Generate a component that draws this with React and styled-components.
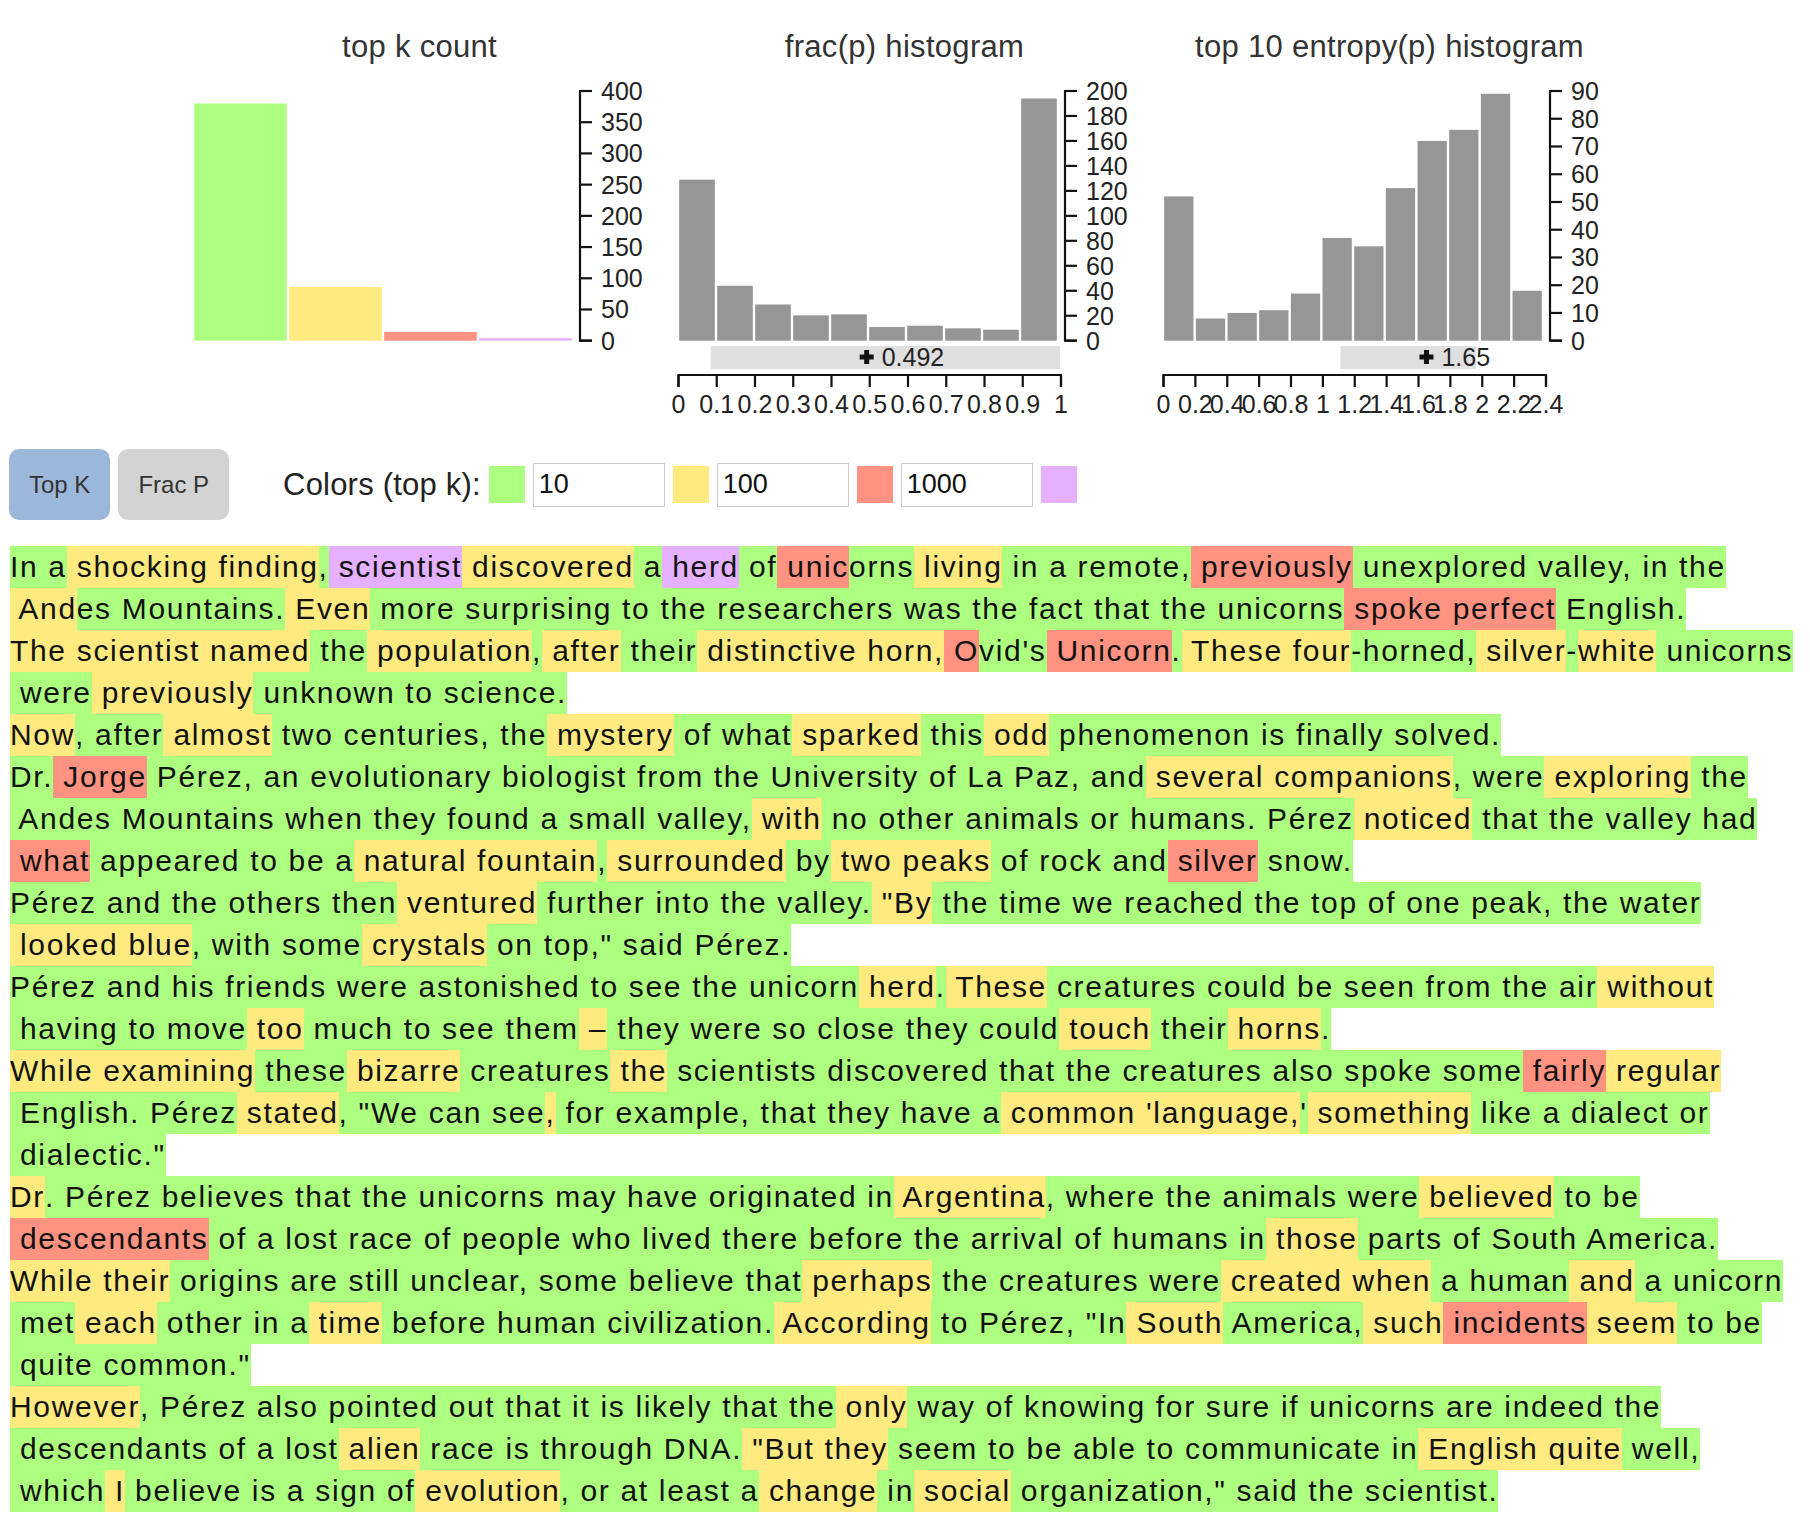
import { useState } from 'react';
import styled, { createGlobalStyle } from 'styled-components';

const COLORS = { g: '#adff80', y: '#ffea80', r: '#ff9280', p: '#e5b0ff' };

const GlobalStyle = createGlobalStyle`
  body {
    margin: 0;
    background: #fff;
    color: #111;
    font-family: "Liberation Sans", Arial, sans-serif;
  }
`;

const Page = styled.div`
  width: 1810px;
`;

const ChartRow = styled.div`
  display: flex;
  padding: 27px 0 0 177px;
`;

const ChartPanel = styled.div`
  width: 485px;
  display: flex;
  flex-direction: column;
  align-items: center;
`;

const ChartTitle = styled.h2`
  margin: 0;
  height: 40px;
  line-height: 40px;
  font-size: 31px;
  font-weight: normal;
  letter-spacing: 0.3px;
  color: #333;
`;

const ChartSvg = styled.svg`
  display: block;
  margin-top: -1px;
  font-family: "Liberation Sans", Arial, sans-serif;
  font-size: 25px;
  fill: #222;
`;

const Controls = styled.div`
  display: flex;
  align-items: center;
  gap: 8px;
  height: 71px;
  margin-top: 23px;
  padding-left: 9px;
`;

const ModeButton = styled.button`
  height: 71px;
  padding: 0 20px;
  border: none;
  border-radius: 10px;
  background: ${(p) => (p.$active ? '#9bb8da' : '#d3d3d3')};
  color: #333;
  font-family: inherit;
  font-size: 24px;
  cursor: pointer;
`;

const ColorsLabel = styled.span`
  margin-left: 46px;
  font-size: 31px;
  letter-spacing: 0.2px;
  color: #222;
`;

const Swatch = styled.span`
  width: 36px;
  height: 37px;
  background: ${(p) => p.$color};
`;

const ThresholdInput = styled.input`
  box-sizing: border-box;
  width: 132px;
  height: 44px;
  padding: 0 5px;
  border: 1px solid #cbcbcb;
  font-family: inherit;
  font-size: 27px;
  color: #111;
  outline: none;
`;

const TextBlock = styled.div`
  margin-top: 26px;
  padding-left: 10px;
`;

const Line = styled.div`
  display: flex;
  height: 42px;
  line-height: 42px;
  font-size: 30px;
  letter-spacing: 1.67px;
  white-space: pre;
`;

const Token = styled.span`
  background: ${(p) => COLORS[p.$c]};
`;

// plot geometry shared by the three charts (svg coords)
const P = { left: 16, right: 396, top: 25, bottom: 274.7, axisX: 403, xl: 16.5, xr: 399, xAxisY: 309 };

function Plus({ x, y }) {
  return (
    <path
      transform={`translate(${x},${y})`}
      d="M-7,-2.5h14v5h-14z M-2.5,-7h5v14h-5z"
      fill="#111"
    />
  );
}

function Chart({ title, bars, yMax, yStep, xLabels, xMax, mean }) {
  const h = P.bottom - P.top;
  const y = (v) => P.bottom - (v / yMax) * h;
  const bw = (P.right - P.left) / bars.length;
  const xs = (v) => P.xl + (v / xMax) * (P.xr - P.xl);
  const yTicks = [];
  for (let v = 0; v <= yMax; v += yStep) yTicks.push(v);

  return (
    <ChartPanel>
      <ChartTitle>{title}</ChartTitle>
      <ChartSvg width="485" height="360" viewBox="0 0 485 360">
        {bars.map((b, i) => (
          <rect
            key={i}
            x={P.left + i * bw + 1.2}
            y={y(b.value)}
            width={bw - 2.4}
            height={P.bottom - y(b.value)}
            fill={b.color || '#969696'}
          />
        ))}

        <path
          d={`M${P.axisX + 12},${P.top}H${P.axisX}V${P.bottom}H${P.axisX + 12}`}
          fill="none"
          stroke="#111"
          strokeWidth="2.2"
        />
        {yTicks.map((v) => (
          <g key={v} transform={`translate(0,${y(v)})`}>
            <line x1={P.axisX} x2={P.axisX + 12} stroke="#111" strokeWidth="2.2" />
            <text x={P.axisX + 21} dy="0.36em">{v}</text>
          </g>
        ))}

        {mean && (
          <g>
            <rect x={xs(mean.lo)} y="280" width={xs(mean.hi) - xs(mean.lo)} height="23" fill="#dfdfdf" />
            <Plus x={xs(mean.value)} y={291} />
            <text x={xs(mean.value) + 15} y="300">{mean.label}</text>
          </g>
        )}

        {xLabels && (
          <g>
            <path
              d={`M${P.xl},${P.xAxisY + 12}V${P.xAxisY}H${P.xr}V${P.xAxisY + 12}`}
              fill="none"
              stroke="#111"
              strokeWidth="2.2"
            />
            {xLabels.map((l, i) => {
              const x = P.xl + (i * (P.xr - P.xl)) / (xLabels.length - 1);
              return (
                <g key={l}>
                  <line x1={x} x2={x} y1={P.xAxisY} y2={P.xAxisY + 12} stroke="#111" strokeWidth="2.2" />
                  <text x={x} y="347" textAnchor="middle">{l}</text>
                </g>
              );
            })}
          </g>
        )}
      </ChartSvg>
    </ChartPanel>
  );
}

const topK = [
  { value: 380, color: COLORS.g },
  { value: 86, color: COLORS.y },
  { value: 14, color: COLORS.r },
  { value: 4, color: COLORS.p },
];
const fracP = [129, 44, 29, 20.3, 21.1, 11, 12, 9.9, 8.8, 194].map((value) => ({ value }));
const entropy = [52, 8, 10, 11, 17, 37, 34, 55, 72, 76, 89, 18].map((value) => ({ value }));

const fracLabels = ['0', '0.1', '0.2', '0.3', '0.4', '0.5', '0.6', '0.7', '0.8', '0.9', '1'];
const entLabels = ['0', '0.2', '0.4', '0.6', '0.8', '1', '1.2', '1.4', '1.6', '1.8', '2', '2.2', '2.4'];

// each visual line: segments split by "|", first char of a segment is its colour key
const LINES = [
  `gIn a|y shocking finding|g,|p scientist|y discovered|g a|p herd|g of|r unic|gorns|y living|g in a remote,|r previously|g unexplored valley, in the`,
  `y And|ges Mountains.|y Even|g more surprising to the researchers was the fact that the unicorns|r spoke perfect|g English.`,
  `yThe scientist named|g the|y population|g,|y after|g their|y distinctive horn,|r O|gvid's|r Unicorn|g.|y These four|g-horned,|y silver|g-|ywhite|g unicorns`,
  `g were|y previously|g unknown to science.`,
  `yNow|g, after|y almost|g two centuries, the|y mystery|g of what|y sparked|g this|y odd|g phenomenon is finally solved.`,
  `gDr.|r Jorge|g Pérez, an evolutionary biologist from the University of La Paz, and|y several companions|g, were|y exploring|g the`,
  `g Andes Mountains when they found a small valley,|y with|g no other animals or humans. Pérez|y noticed|g that the valley had`,
  `r what|g appeared to be a|y natural fountain|g,|y surrounded|g by|y two peaks|g of rock and|r silver|g snow.`,
  `gPérez and the others then|y ventured|g further into the valley.|y "By|g the time we reached the top of one peak, the water`,
  `y looked blue|g, with some|y crystals|g on top," said Pérez.`,
  `gPérez and his friends were astonished to see the unicorn|y herd|g.|y These|g creatures could be seen from the air|y without`,
  `g having to move|y too|g much to see them|y –|g they were so close they could|y touch|g their|y horns|g.`,
  `yWhile examining|g these|y bizarre|g creatures|y the|g scientists discovered that the creatures also spoke some|r fairly|y regular`,
  `g English. Pérez|y stated|g, "We can see|y,|g for example, that they have a|y common 'language,|g'|y something|g like a dialect or`,
  `g dialectic."`,
  `yDr|g. Pérez believes that the unicorns may have originated in|y Argentina|g, where the animals were|y believed|g to be`,
  `r descendants|g of a lost race of people who lived there before the arrival of humans in|y those|g parts of South America.`,
  `yWhile their|g origins are still unclear, some believe that|y perhaps|g the creatures were|y created when|g a human|y and|g a unicorn`,
  `g met|y each|g other in a|y time|g before human civilization.|y According|g to Pérez, "In|y South|g America,|y such|r incidents|y seem|g to be`,
  `g quite common."`,
  `yHowever|g, Pérez also pointed out that it is likely that the|y only|g way of knowing for sure if unicorns are indeed the`,
  `g descendants of a lost|y alien|g race is through DNA.|y "But they|g seem to be able to communicate in|y English quite|g well,`,
  `g which|y I|g believe is a sign of|y evolution|g, or at least a|y change|g in|y social|g organization," said the scientist.`,
];

export default function App() {
  const [mode, setMode] = useState('topk');
  const [limits, setLimits] = useState(['10', '100', '1000']);
  const swatches = [COLORS.g, COLORS.y, COLORS.r];

  const setLimit = (i, v) => setLimits((prev) => prev.map((x, j) => (j === i ? v : x)));

  return (
    <>
      <GlobalStyle />
      <Page>
        <ChartRow>
          <Chart title="top k count" bars={topK} yMax={400} yStep={50} />
          <Chart
            title="frac(p) histogram"
            bars={fracP}
            yMax={200}
            yStep={20}
            xLabels={fracLabels}
            xMax={1}
            mean={{ lo: 0.084, hi: 0.997, value: 0.492, label: '0.492' }}
          />
          <Chart
            title="top 10 entropy(p) histogram"
            bars={entropy}
            yMax={90}
            yStep={10}
            xLabels={entLabels}
            xMax={2.4}
            mean={{ lo: 1.11, hi: 1.96, value: 1.65, label: '1.65' }}
          />
        </ChartRow>

        <Controls>
          <ModeButton $active={mode === 'topk'} onClick={() => setMode('topk')}>Top K</ModeButton>
          <ModeButton $active={mode === 'fracp'} onClick={() => setMode('fracp')}>Frac P</ModeButton>
          <ColorsLabel>Colors (top k):</ColorsLabel>
          {limits.map((v, i) => (
            <Pair key={i} color={swatches[i]} value={v} onChange={(e) => setLimit(i, e.target.value)} />
          ))}
          <Swatch $color={COLORS.p} />
        </Controls>

        <TextBlock>
          {LINES.map((line, i) => (
            <Line key={i}>
              {line.split('|').map((seg, j) => (
                <Token key={j} $c={seg[0]}>{seg.slice(1)}</Token>
              ))}
            </Line>
          ))}
        </TextBlock>
      </Page>
    </>
  );
}

function Pair({ color, value, onChange }) {
  return (
    <>
      <Swatch $color={color} />
      <ThresholdInput value={value} onChange={onChange} />
    </>
  );
}
